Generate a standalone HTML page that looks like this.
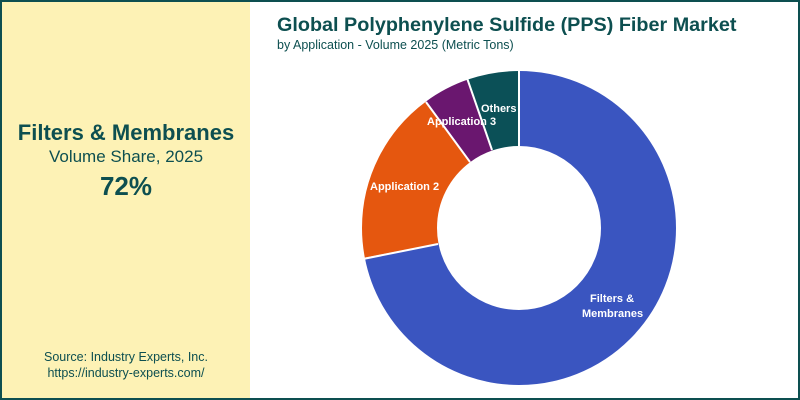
<html><body style="margin:0;width:800px;height:400px;overflow:hidden;font-family:'Liberation Sans',sans-serif;background:#fff">
<div style="position:absolute;left:0;top:0;width:796px;height:396px;border:2px solid #0d4f50;"></div>
<div style="position:absolute;left:2px;top:2px;width:248px;height:396px;background:#fdf2b5;"></div>
<div style="position:absolute;left:2px;top:120px;width:248px;text-align:center;color:#0d4f50">
<div style="font-size:22px;font-weight:bold">Filters &amp; Membranes</div>
<div style="font-size:17px;margin-top:1px">Volume Share, 2025</div>
<div style="font-size:26px;font-weight:bold;margin-top:4px">72%</div>
</div>
<div style="position:absolute;left:2px;top:349px;width:248px;text-align:center;color:#0d4f50;font-size:12.5px;line-height:16px">Source: Industry Experts, Inc.<br>https://industry-experts.com/</div>
<div style="position:absolute;left:277px;top:14px;color:#0d4f50;font-size:19.8px;font-weight:bold">Global Polyphenylene Sulfide (PPS) Fiber Market</div>
<div style="position:absolute;left:277px;top:38px;color:#0d4f50;font-size:12.5px">by Application - Volume 2025 (Metric Tons)</div>
<svg style="position:absolute;left:0;top:0" width="800" height="400">
<g transform="rotate(-90 519 228)" fill="none" stroke-width="75">
<circle cx="519" cy="228" r="119.5" stroke="#3a55c0" stroke-dasharray="540.2 800"/>
<circle cx="519" cy="228" r="119.5" stroke="#e5570f" stroke-dasharray="0 540.2 134.5 800"/>
<circle cx="519" cy="228" r="119.5" stroke="#6a176f" stroke-dasharray="0 674.7 36.5 800"/>
<circle cx="519" cy="228" r="119.5" stroke="#0b5057" stroke-dasharray="0 711.2 39.6 800"/>
</g>
<g stroke="#fff" stroke-width="2">
<line x1="519" y1="70" x2="519" y2="146"/>
<line x1="438" y1="244" x2="363" y2="259"/>
<line x1="470" y1="162" x2="426" y2="102"/>
<line x1="492" y1="150" x2="467" y2="78"/>
</g>
<g fill="#fff" font-family="Liberation Sans, sans-serif" font-weight="bold" font-size="11">
<text x="481" y="112">Others</text>
<text x="427" y="125">Application  3</text>
<text x="370" y="190">Application  2</text>
<text x="590" y="302">Filters &amp;</text>
<text x="582" y="317">Membranes</text>
</g>
</svg>
</body></html>
